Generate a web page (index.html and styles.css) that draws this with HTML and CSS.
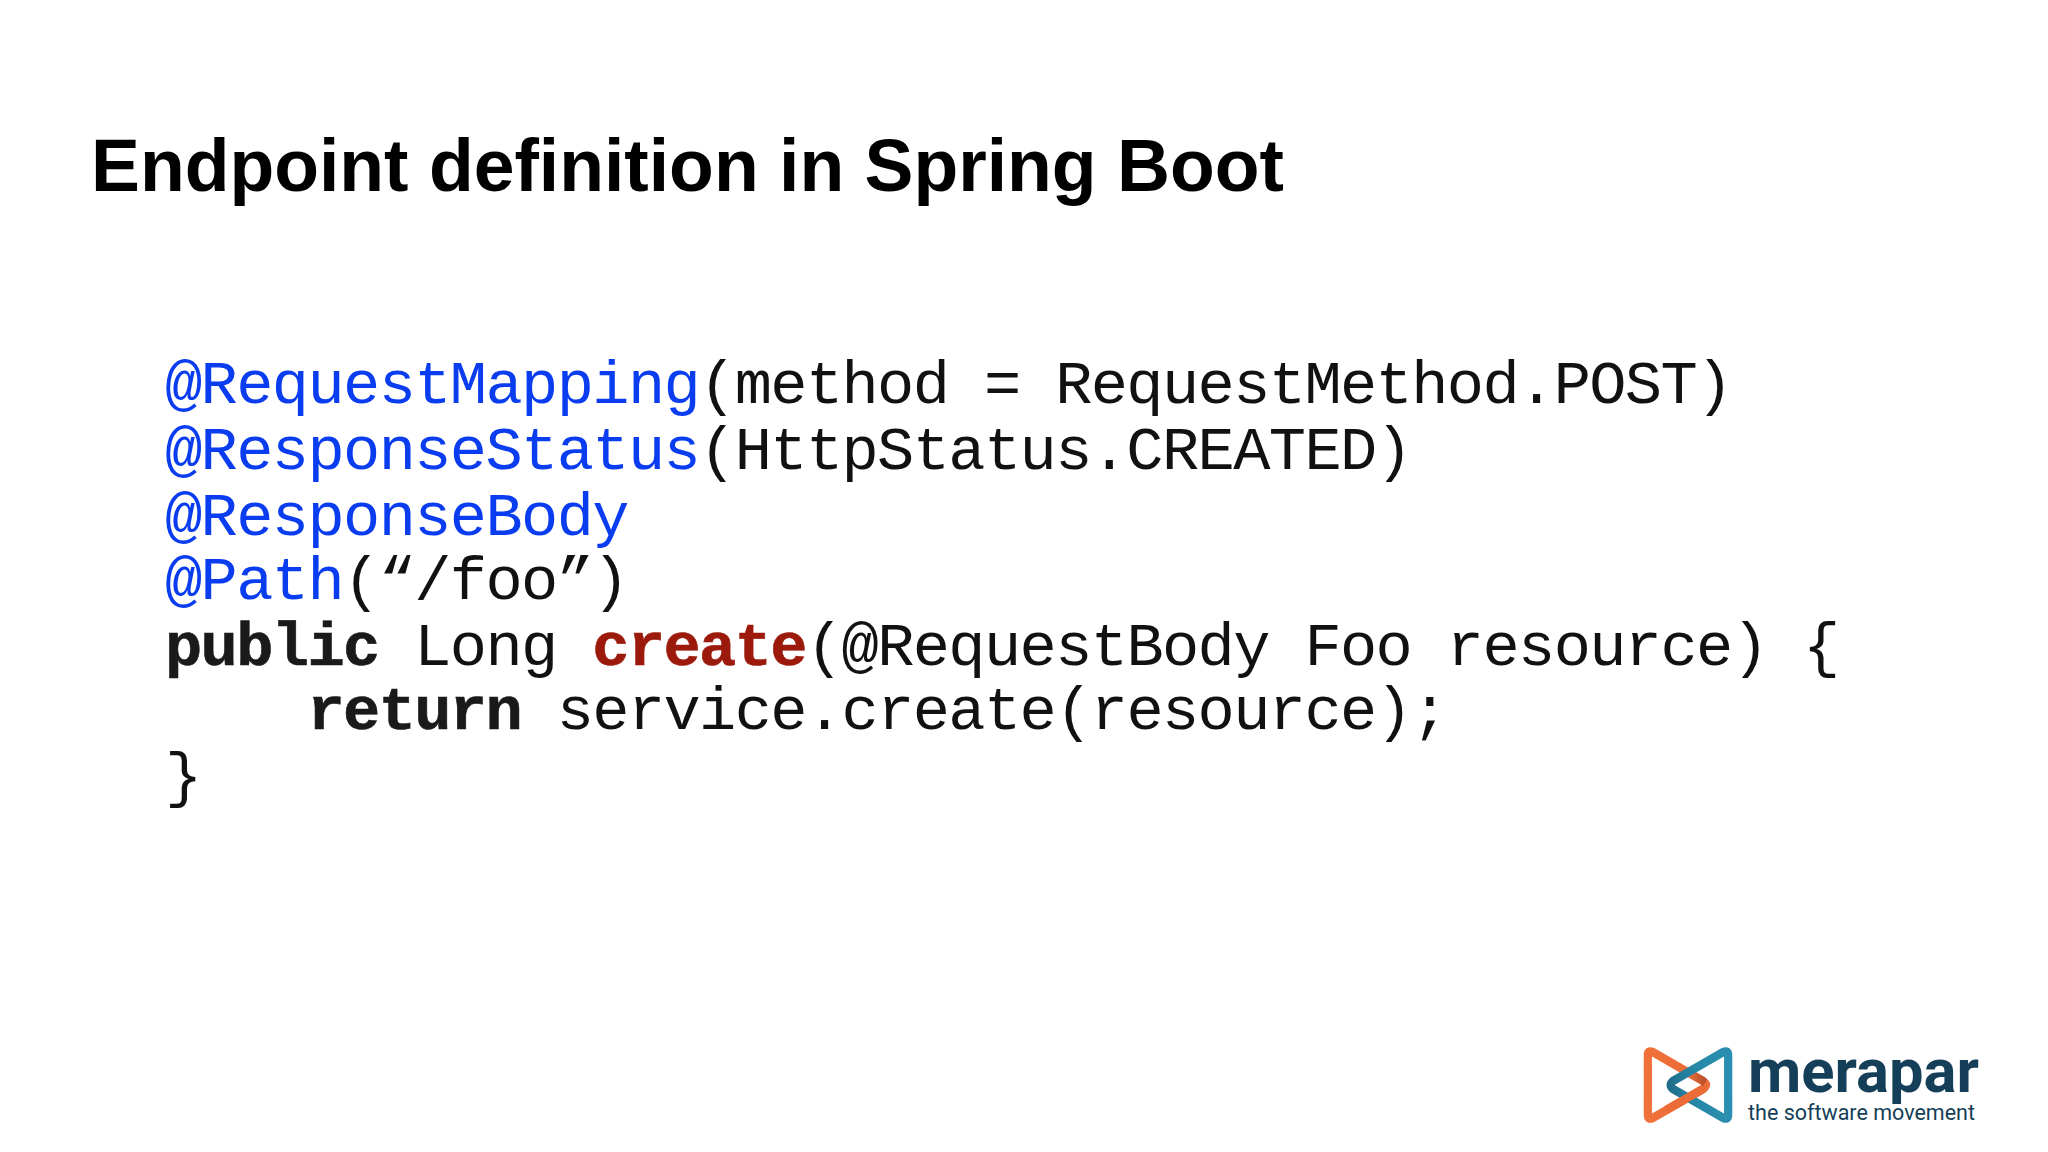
FILE: index.html
```
<!DOCTYPE html>
<html><head><meta charset="utf-8"><title>Endpoint definition</title><link rel="stylesheet" href="styles.css"></head>
<body>
<div class="slide">
<h1 class="title">Endpoint definition in Spring Boot</h1>
<div class="code">
<div class="line"><span class="ann">@RequestMapping</span>(method = RequestMethod.POST)</div>
<div class="line"><span class="ann">@ResponseStatus</span>(HttpStatus.CREATED)</div>
<div class="line"><span class="ann">@ResponseBody</span></div>
<div class="line tight"><span class="ann">@Path</span>(“/foo”)</div>
<div class="line"><b class="kw">public</b> Long <b class="fn">create</b>(@RequestBody Foo resource) {</div>
<div class="line tight">    <b class="kw">return</b> service.create(resource);</div>
<div class="line">}</div>
</div>
<div class="logo">
<svg class="mark" width="90" height="78" viewBox="0 0 93 78" preserveAspectRatio="none">
<defs>
<linearGradient id="og" x1="0" y1="0" x2="1" y2="0"><stop offset="0" stop-color="#f0703a"/><stop offset=".7" stop-color="#ec6c38"/><stop offset="1" stop-color="#b8502a"/></linearGradient>
<linearGradient id="tg" x1="1" y1="0" x2="0" y2="0"><stop offset="0" stop-color="#2a8fb0"/><stop offset=".6" stop-color="#2687a6"/><stop offset="1" stop-color="#1f6f8c"/></linearGradient>
</defs>
<path d="M5 9 Q5 4 10 6 L62 35 Q67 39 62 43 L10 72 Q5 74 5 69 Z" fill="none" stroke="url(#og)" stroke-width="8.5" stroke-linejoin="round"/>
<path d="M88 9 Q88 4 83 6 L31 35 Q26 39 31 43 L83 72 Q88 74 88 69 Z" fill="none" stroke="url(#tg)" stroke-width="8.5" stroke-linejoin="round"/>
<path d="M64 37 Q67 39 62 43 L24 64" fill="none" stroke="#ec6c38" stroke-width="8.5" stroke-linecap="butt"/>
</svg>
<div class="brand"><div class="name">merapar</div><div class="tag">the software movement</div></div>
</div>
</div>
</body></html>
```
FILE: styles.css
```
html,body{margin:0;padding:0;background:#fff}
.slide{width:2048px;height:1152px;overflow:hidden;background:#fff;padding:124px 0 0 91px;box-sizing:border-box;display:flex;flex-direction:column}
.title{margin:0;font:700 73.3px/84px "Liberation Sans",sans-serif;color:#000}
.code{margin:146px 0 0 74px;font:62px/66px "Liberation Mono",monospace;letter-spacing:-1.6px;color:#111}
.line{height:66px;white-space:pre}
.tight{margin-top:-2px}
.ann{color:#0a3cf0}
.kw{color:#1a1a1a;-webkit-text-stroke:.6px #1a1a1a}
.fn{color:#9c1a0c;-webkit-text-stroke:.6px #9c1a0c}
.logo{margin-top:auto;margin-bottom:26px;margin-right:69px;align-self:flex-end;display:flex;gap:15px;align-items:flex-start}
.brand{margin-top:-3px}
.name{font:700 61.5px/56px Roboto,sans-serif;color:#153f58}
.tag{margin-top:1px;font:21.5px/26px Roboto,sans-serif;color:#153f58;white-space:nowrap}
```
